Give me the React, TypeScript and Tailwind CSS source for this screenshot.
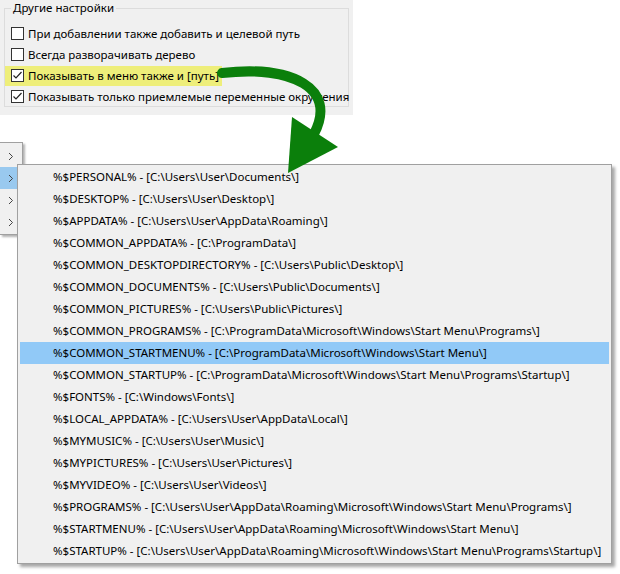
import React from 'react';

const font = { fontFamily: '"Noto Sans", "Open Sans", sans-serif' };

const options = [
  { label: 'При добавлении также добавить и целевой путь', checked: false, marked: false },
  { label: 'Всегда разворачивать дерево', checked: false, marked: false },
  { label: 'Показывать в меню также и [путь]', checked: true, marked: true },
  { label: 'Показывать только приемлемые переменные окружения', checked: true, marked: false },
];

const items = [
  '%$PERSONAL% - [C:\\Users\\User\\Documents\\]',
  '%$DESKTOP% - [C:\\Users\\User\\Desktop\\]',
  '%$APPDATA% - [C:\\Users\\User\\AppData\\Roaming\\]',
  '%$COMMON_APPDATA% - [C:\\ProgramData\\]',
  '%$COMMON_DESKTOPDIRECTORY% - [C:\\Users\\Public\\Desktop\\]',
  '%$COMMON_DOCUMENTS% - [C:\\Users\\Public\\Documents\\]',
  '%$COMMON_PICTURES% - [C:\\Users\\Public\\Pictures\\]',
  '%$COMMON_PROGRAMS% - [C:\\ProgramData\\Microsoft\\Windows\\Start Menu\\Programs\\]',
  '%$COMMON_STARTMENU% - [C:\\ProgramData\\Microsoft\\Windows\\Start Menu\\]',
  '%$COMMON_STARTUP% - [C:\\ProgramData\\Microsoft\\Windows\\Start Menu\\Programs\\Startup\\]',
  '%$FONTS% - [C:\\Windows\\Fonts\\]',
  '%$LOCAL_APPDATA% - [C:\\Users\\User\\AppData\\Local\\]',
  '%$MYMUSIC% - [C:\\Users\\User\\Music\\]',
  '%$MYPICTURES% - [C:\\Users\\User\\Pictures\\]',
  '%$MYVIDEO% - [C:\\Users\\User\\Videos\\]',
  '%$PROGRAMS% - [C:\\Users\\User\\AppData\\Roaming\\Microsoft\\Windows\\Start Menu\\Programs\\]',
  '%$STARTMENU% - [C:\\Users\\User\\AppData\\Roaming\\Microsoft\\Windows\\Start Menu\\]',
  '%$STARTUP% - [C:\\Users\\User\\AppData\\Roaming\\Microsoft\\Windows\\Start Menu\\Programs\\Startup\\]',
];

const Checkbox = ({ checked }: { checked: boolean }) => (
  <span className="w-[13px] h-[13px] border border-[#333] bg-white flex items-center justify-center shrink-0">
    {checked && (
      <svg width="11" height="11" viewBox="0 0 11 11">
        <polyline points="1.5,5.5 4,8 9.5,2" fill="none" stroke="#222" strokeWidth="1.2" />
      </svg>
    )}
  </span>
);

const Chevron = () => (
  <svg width="6" height="9" viewBox="0 0 6 9">
    <polyline points="1,1 4.5,4.5 1,8" fill="none" stroke="#444" strokeWidth="1" />
  </svg>
);

export default function App() {
  return (
    <div className="relative w-[620px] h-[574px] bg-white overflow-hidden text-[11.5px] text-black" style={font}>
      {/* настройки */}
      <div className="w-[353px] h-[115px] bg-[#f0f0f0] pt-[8px] pl-[4px] pr-[4px]">
        <div className="relative h-[99px] border border-[#dcdcdc]">
          <span className="absolute left-[6px] top-[-9px] px-[2px] bg-[#f0f0f0] leading-[16px]">Другие настройки</span>
          <div className="flex flex-col pt-[14px]">
            {options.map((o) => (
              <div key={o.label} className="h-[21px] flex items-center">
                <div className={`flex items-center gap-[4px] h-[20px] pl-[6px] pr-[3px] ${o.marked ? 'bg-[#eeee7a]' : ''}`}>
                  <Checkbox checked={o.checked} />
                  <span className="whitespace-nowrap">{o.label}</span>
                </div>
              </div>
            ))}
          </div>
        </div>
      </div>

      {/* родительское меню */}
      <div className="absolute left-0 top-[142px] w-[23px] bg-[#f0f0f0] border border-l-0 border-[#a0a0a0] pt-[2px] pb-[1px] shadow-[2px_2px_2px_rgba(0,0,0,0.3)]">
        {[0, 1, 2, 3].map((i) => (
          <div key={i} className={`h-[22px] flex items-center pl-[8px] ${i === 1 ? 'bg-[#99c9ef]' : ''}`}>
            <Chevron />
          </div>
        ))}
      </div>

      {/* подменю */}
      <div className="absolute left-[17px] top-[164px] w-[595px] bg-[#f0f0f0] border border-[#a0a0a0] pt-[1px] pb-[1px] px-[2px] shadow-[3px_3px_3px_rgba(0,0,0,0.35)]">
        {items.map((t, i) => (
          <div key={t} className={`h-[22px] flex items-center pl-[33px] whitespace-nowrap ${i === 8 ? 'bg-[#91c9f7]' : ''}`}>
            {t}
          </div>
        ))}
      </div>

      {/* стрелка */}
      <svg className="absolute left-0 top-0 pointer-events-none" width="620" height="574" viewBox="0 0 620 574">
        <path d="M222 73 C 292 65, 338 88, 314 134" fill="none" stroke="#0b7f0b" strokeWidth="10" strokeLinecap="round" />
        <polygon points="292,117 338,147 288,173" fill="#0b7f0b" />
      </svg>
    </div>
  );
}
